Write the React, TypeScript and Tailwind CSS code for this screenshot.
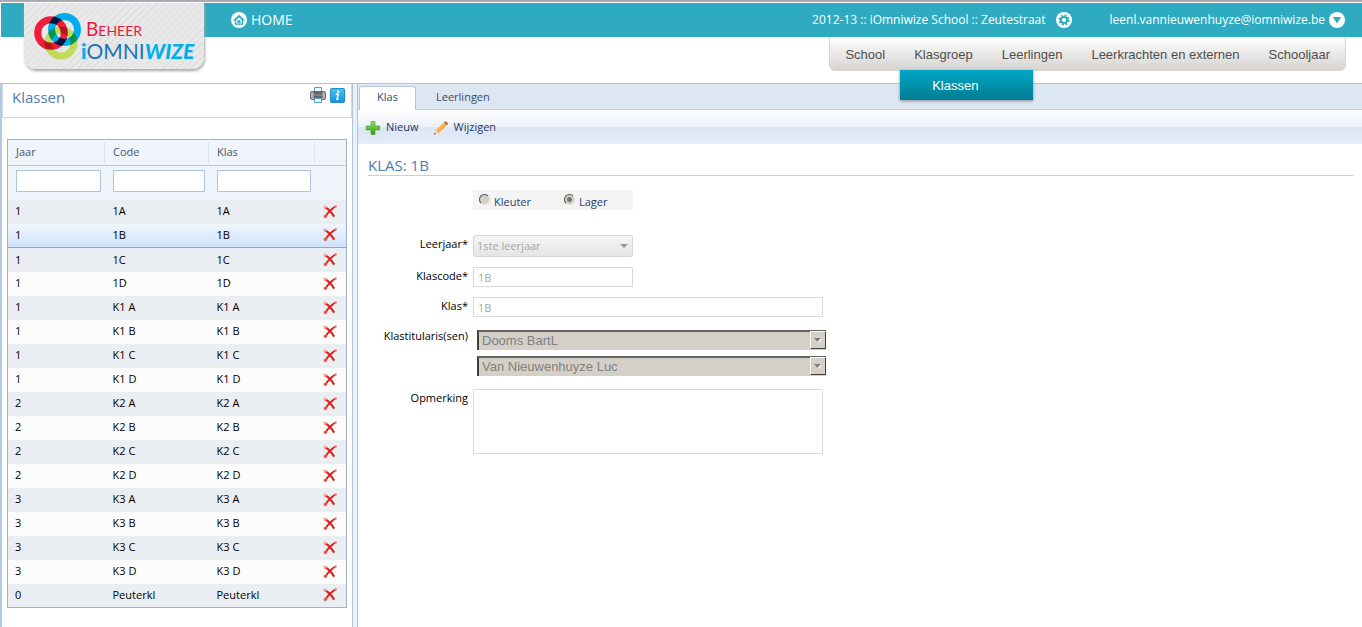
import type { ReactNode } from "react";

const NAV = [
  { label: "School" },
  { label: "Klasgroep", sub: "Klassen" },
  { label: "Leerlingen" },
  { label: "Leerkrachten en externen" },
  { label: "Schooljaar" },
];

const ROWS = [
  ["1", "1A"],
  ["1", "1B"],
  ["1", "1C"],
  ["1", "1D"],
  ["1", "K1 A"],
  ["1", "K1 B"],
  ["1", "K1 C"],
  ["1", "K1 D"],
  ["2", "K2 A"],
  ["2", "K2 B"],
  ["2", "K2 C"],
  ["2", "K2 D"],
  ["3", "K3 A"],
  ["3", "K3 B"],
  ["3", "K3 C"],
  ["3", "K3 D"],
  ["0", "Peuterkl"],
];

const SELECTED = "1B";

function HomeIcon() {
  return (
    <svg width="16" height="16" viewBox="0 0 16 16">
      <circle cx="8" cy="8" r="8" fill="#fff" />
      <path d="M2 8.600 8 2.800l6 5.800h-1.800v4.200H3.800V8.600z" fill="#2eabc1" />
      <path d="M5.200 8 8 5.400 10.800 8v3.400H5.200z" fill="#fff" />
      <path d="M6.500 8.200h3v3h-3z" fill="#2eabc1" />
    </svg>
  );
}

function GearIcon() {
  return (
    <svg width="16" height="16" viewBox="0 0 16 16">
      <circle cx="8" cy="8" r="8" fill="#fff" />
      <circle cx="8" cy="8" r="4.600" fill="none" stroke="#2eabc1" strokeWidth="1.800" strokeDasharray="2 1.610" />
      <circle cx="8" cy="8" r="3.100" fill="none" stroke="#2eabc1" strokeWidth="2" />
    </svg>
  );
}

function ChevronIcon() {
  return (
    <svg width="16" height="16" viewBox="0 0 16 16">
      <circle cx="8" cy="8" r="8" fill="#fff" />
      <path d="M3.800 5h8.400L8 11.600z" fill="#2eabc1" />
    </svg>
  );
}

function PrintIcon() {
  return (
    <svg width="16" height="16" viewBox="0 0 16 16">
      <path d="M4.500.5h7V6h-7z" fill="#eaf6ff" stroke="#5d9cd0" />
      <rect x="0.5" y="4.500" width="15" height="8" rx="1.500" fill="#b4b4b4" stroke="#6a6a6a" />
      <path d="M3.500 4.500h9v7h-9z" fill="#666" />
      <path d="M3 8h10" stroke="#999" />
      <path d="M4.500 11.500h7v4h-7z" fill="#eaf6ff" stroke="#5d9cd0" />
    </svg>
  );
}

function InfoIcon() {
  return (
    <svg width="15" height="15" viewBox="0 0 15 15">
      <defs>
        <linearGradient id="info" x2="0" y2="1">
          <stop offset="0" stopColor="#4cc3f2" />
          <stop offset="1" stopColor="#1592dc" />
        </linearGradient>
      </defs>
      <rect x="0.5" y="0.5" width="14" height="14" rx="1" fill="url(#info)" stroke="#1b8fc4" />
      <circle cx="8.300" cy="3.800" r="1.200" fill="#fff" />
      <path d="M5.800 6.300h2.400L7 11.300h1.600" fill="none" stroke="#fff" strokeWidth="1.500" />
    </svg>
  );
}

function PlusIcon() {
  return (
    <svg width="16" height="16" viewBox="0 0 16 16">
      <defs>
        <linearGradient id="plus" x2="0" y2="1">
          <stop offset="0" stopColor="#9be05a" />
          <stop offset="1" stopColor="#2f9e14" />
        </linearGradient>
      </defs>
      <path
        d="M6 1.500h4V6h4.800v4H10v4.500H6V10H1.200V6H6z"
        fill="url(#plus)"
        stroke="#57a53b"
        strokeWidth="0.700"
      />
    </svg>
  );
}

function PencilIcon() {
  return (
    <svg width="16" height="16" viewBox="0 0 16 16">
      <path d="m2.600 10.500 8.600-8.200 2.800 2.800-8.600 8.200z" fill="#f0a93c" />
      <path d="m3.600 11.400 8.600-8.100" stroke="#f9cf80" />
      <path d="m11.200 2.300 1.200-1.100 2.800 2.800L14 5.100z" fill="#a8432a" />
      <path d="m2.600 10.500 2.800 2.800L1 14.600z" fill="#f6dcae" />
      <path d="m1.600 12.700 1.400 1.300L1 14.600z" fill="#333" />
    </svg>
  );
}

function DeleteIcon() {
  return (
    <svg width="14" height="14" viewBox="0 0 14 14">
      <path d="M1.600 2.300c3 .7 6.600 4.700 9.600 9.400" fill="none" stroke="#e01b12" strokeWidth="2.200" />
      <path d="M13.200 1.200C8.800 3.500 5 7.500 2.300 11.800" fill="none" stroke="#d6261c" strokeWidth="1.900" />
      <path d="M.5.8h3.200v2.600H.5z" fill="#f0a39b" />
      <path d="m.8 10.200 2.400-.6 1.200 1.700-1.600 2-2-.7z" fill="#de5a50" />
      <path d="M13.800 1 11.600 2" stroke="#eb8c84" strokeWidth="1.500" />
    </svg>
  );
}

function Rings() {
  return (
    <svg width="50" height="50" viewBox="0 0 50 50" fill="none" strokeWidth="7" className="isolate">
      <circle cx="29" cy="32" r="13" stroke="#bfda5c" className="mix-blend-multiply" />
      <circle cx="32.500" cy="18.500" r="13" stroke="#00aeef" className="mix-blend-multiply" />
      <circle cx="19" cy="22" r="13.300" stroke="#ef1c3c" className="mix-blend-multiply" />
    </svg>
  );
}

function Logo() {
  return (
    <a
      href="#"
      className="absolute top-px left-6 flex h-[66px] w-[180px] rounded-b-xl bg-[repeating-linear-gradient(135deg,#e8e8e8_0_4px,#dedede_4px_5px)] pt-2 pl-2 shadow-[1px_2px_3px_#a8a8a8]"
    >
      <span className="shrink-0">
        <Rings />
      </span>
      <span className="flex flex-col pt-2 font-[Lato,sans-serif] whitespace-nowrap">
        <span className="pl-1 text-[19px] leading-5 text-[#e8173b]">
          B<span className="text-[14px]">EHEER</span>
        </span>
        <span className="-ml-px text-[21px] leading-5 text-[#1c75bc]">
          <b className="font-black text-[#00aeef]">i</b>
          <span>OMNI</span>
          <b className="font-black text-[#00aeef] italic">WIZE</b>
        </span>
      </span>
    </a>
  );
}

function Header() {
  return (
    <header className="relative h-[83px] border-t-2 border-t-[#a9adb2] bg-white">
      <div className="mt-px ml-px flex h-[34px] items-center bg-[#2eabc1] pr-[17px] pl-[230px] text-[12px] font-medium text-white">
        <a href="#" className="flex items-center gap-1 text-sm font-normal">
          <HomeIcon />
          HOME
        </a>
        <div className="ml-auto flex items-center gap-[38px]">
          <a href="#" className="flex items-center gap-[10px]">
            2012-13 :: iOmniwize School :: Zeutestraat
            <GearIcon />
          </a>
          <a href="#" className="flex items-center gap-1">
            leenl.vannieuwenhuyze@iomniwize.be
            <ChevronIcon />
          </a>
        </div>
      </div>
      <nav className="mr-4 ml-auto flex h-[34px] w-fit items-center gap-[29px] rounded-b-md border border-t-0 border-[#d6d6d6] bg-linear-to-b from-white to-[#d6d4d2] px-[15px] font-['Liberation_Sans',sans-serif] text-[13px] text-[#4f4f4f]">
        {NAV.map((item) => (
          <div key={item.label} className="relative flex h-full items-center pt-[2px]">
            <a href="#">{item.label}</a>
            {item.sub && (
              <a
                href="#"
                className="absolute top-full -left-[14px] z-10 flex h-[30px] w-[133px] items-center bg-linear-to-b from-[#00a7c6] to-[#007d92] pt-px pl-8 text-white shadow-[0_1px_3px_#8a8a8a]"
              >
                {item.sub}
              </a>
            )}
          </div>
        ))}
      </nav>
      <Logo />
    </header>
  );
}

function ClassTable() {
  return (
    <table className="w-full table-fixed border-collapse border border-[#9fb1c8] text-left">
      <colgroup>
        <col className="w-[97px]" />
        <col className="w-[104px]" />
        <col className="w-[106px]" />
        <col />
      </colgroup>
      <thead className="bg-[#f0f4fb] text-[#4a5675]">
        <tr className="h-[26px] border-b border-[#b8c9dd]">
          {["Jaar", "Code", "Klas"].map((name) => (
            <th key={name} className="border-r border-[#dde5f0] pl-2 font-normal">
              {name}
            </th>
          ))}
          <th />
        </tr>
        <tr className="h-[34px]">
          {["Jaar", "Code", "Klas"].map((name) => (
            <td key={name} className="pr-1 pb-1 pl-2">
              <input
                aria-label={`Filter ${name}`}
                className="block h-[22px] w-full border border-[#aec3dd] bg-white px-1"
              />
            </td>
          ))}
          <td />
        </tr>
      </thead>
      <tbody className="text-black">
        {ROWS.map(([year, code]) => (
          <tr
            key={code}
            className={
              code === SELECTED
                ? "h-6 border-b border-[#86abd9] bg-linear-to-b from-[#f0f6fe] to-[#cfe2fb]"
                : "h-6 odd:bg-[#eaeef3] even:bg-[#fcfcfc]"
            }
          >
            <td className="pl-[7px]">{year}</td>
            <td className="pl-2">{code}</td>
            <td className="pl-2">{code}</td>
            <td className="pl-2">
              <button aria-label={`Verwijder ${code}`} className="block">
                <DeleteIcon />
              </button>
            </td>
          </tr>
        ))}
      </tbody>
    </table>
  );
}

function Field({ id, label, children }: { id: string; label: string; children: ReactNode }) {
  return (
    <div className="flex gap-[5px]">
      <label htmlFor={id} className="w-[100px] shrink-0 text-right leading-[18px] text-black">
        {label}
      </label>
      {children}
    </div>
  );
}

function ClassicSelect({ id, value, label }: { id: string; value: string; label?: string }) {
  return (
    <div className="relative h-5 w-[349px]">
      <select
        id={id}
        aria-label={label}
        disabled
        className="block h-full w-full appearance-none border-2 border-r-0 border-b-0 border-[#404040] border-t-[#666] bg-[#d4d0c8] pb-px pl-[3px] font-['Liberation_Sans',sans-serif] text-[13px] leading-4 text-[#808080] opacity-100"
      >
        <option>{value}</option>
      </select>
      <span className="pointer-events-none absolute top-px right-0 flex h-[18px] w-4 items-center justify-center border border-white border-r-[#404040] border-b-[#404040] bg-[#d4d0c8]">
        <svg width="8" height="5" viewBox="0 0 8 5">
          <path d="m1 1 3.500 4L8 1z" fill="#fff" />
          <path d="M0 0h7L3.500 4z" fill="#808080" />
        </svg>
      </span>
    </div>
  );
}

const radioClass =
  "h-[11px] w-[11px] appearance-none rounded-full border border-[#e4e1dc] border-t-[#555] border-l-[#555] bg-[#d4d0c8] checked:bg-[radial-gradient(#777_0_2px,#d4d0c8_3px)]";

function ClassForm() {
  return (
    <form>
      <div className="ml-[105px] flex h-5 w-40 bg-[#f4f4f4] pl-[6px] text-[#1f3d70]">
        <label className="flex w-[85px] gap-1 leading-6">
          <input type="radio" name="type" disabled className={`${radioClass} mt-1`} />
          Kleuter
        </label>
        <label className="flex gap-1 leading-6">
          <input type="radio" name="type" disabled defaultChecked className={`${radioClass} mt-1`} />
          Lager
        </label>
      </div>

      <div className="mt-[25px] flex flex-col gap-[10px]">
        <Field id="year" label="Leerjaar*">
          <div className="relative h-[22px] w-40">
            <select
              id="year"
              disabled
              className="block h-full w-full appearance-none rounded-[3px] border border-[#d5d5d5] bg-linear-to-b from-[#f5f5f5] to-[#e5e5e5] pl-[3px] text-[#a5a5a5] opacity-100"
            >
              <option>1ste leerjaar</option>
            </select>
            <svg width="8" height="4" viewBox="0 0 8 4" className="pointer-events-none absolute top-[9px] right-[5px]">
              <path d="M0 0h8L4 4z" fill="#999" />
            </svg>
          </div>
        </Field>
        <Field id="code" label="Klascode*">
          <input
            id="code"
            disabled
            defaultValue="1B"
            className="h-5 w-40 border border-[#d9d9d9] bg-white px-1 text-[#a5a5a5]"
          />
        </Field>
        <Field id="name" label="Klas*">
          <input
            id="name"
            disabled
            defaultValue="1B"
            className="h-5 w-[350px] border border-[#d9d9d9] bg-white px-1 text-[#a5a5a5]"
          />
        </Field>
        <Field id="teacher" label="Klastitularis(sen)">
          <div className="flex flex-col gap-[6px] pt-[3px] pb-[3px] pl-1">
            <ClassicSelect id="teacher" value="Dooms BartL" />
            <ClassicSelect id="teacher2" value="Van Nieuwenhuyze Luc" label="Tweede klastitularis" />
          </div>
        </Field>
        <Field id="remark" label="Opmerking">
          <textarea
            id="remark"
            disabled
            className="h-[65px] w-[350px] resize-none border border-[#d9d9d9] bg-white px-1"
          />
        </Field>
      </div>
    </form>
  );
}

export default function App() {
  return (
    <div className="flex min-h-screen flex-col bg-white font-['Open_Sans','Noto_Sans',sans-serif] text-[11px]">
      <Header />
      <main className="flex flex-1 border-t border-l-2 border-t-[#b0c4da] border-l-[#b5c9e2]">
        <aside className="w-[350px] shrink-0">
          <div className="flex h-[34px] items-start justify-between border border-t-0 border-[#c9d7e8] pt-[3px] pr-[6px] pl-[9px]">
            <h1 className="text-[15px] leading-5 text-[#4f7cb5]">Klassen</h1>
            <div className="flex items-center gap-1">
              <button aria-label="Afdrukken">
                <PrintIcon />
              </button>
              <button aria-label="Info">
                <InfoIcon />
              </button>
            </div>
          </div>
          <div className="pt-[21px] pr-[5px] pb-4 pl-[5px]">
            <ClassTable />
          </div>
        </aside>
        <div className="w-[6px] shrink-0 border-x border-[#b0c4da] bg-[#e9f0f9]" />
        <section className="min-w-0 flex-1">
          <div className="flex h-[26px] items-end border-b border-[#c3d3e5] bg-[#dde7f3] pl-px text-[#3b4a66]">
            <button className="-mb-px h-6 w-[57px] rounded-t-[3px] border border-b-0 border-[#b4c7dc] bg-white pb-[3px]">
              Klas
            </button>
            <button className="h-6 px-5">Leerlingen</button>
          </div>
          <div className="flex h-[34px] items-center gap-[14px] bg-[linear-gradient(#ffffff,#eaf1f9_50%,#dce6f4_51%,#e4ecf7)] pt-px pl-[7px] text-[#1f3566]">
            <button className="flex items-center gap-[5px]">
              <PlusIcon />
              Nieuw
            </button>
            <button className="flex items-center gap-[5px]">
              <PencilIcon />
              Wijzigen
            </button>
          </div>
          <div className="pt-[11px] pr-2 pl-[10px]">
            <h2 className="mb-[14px] border-b border-[#cfcfcf] text-[15px] leading-5 text-[#4f7cb5]">KLAS: 1B</h2>
            <ClassForm />
          </div>
        </section>
      </main>
    </div>
  );
}
